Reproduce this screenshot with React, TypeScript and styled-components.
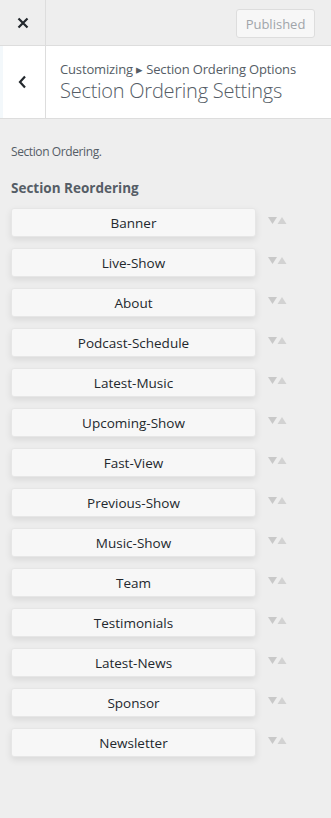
import React from "react";
import styled, { createGlobalStyle } from "styled-components";

const Global = createGlobalStyle`
  html, body { margin: 0; padding: 0; background: #eeeeee; }
  body { font-family: "Open Sans", "Noto Sans", sans-serif; -webkit-font-smoothing: antialiased; }
  * { box-sizing: border-box; }
`;

const Page = styled.div`
  width: 331px;
  min-height: 818px;
  background: #eeeeee;
  display: flex;
  flex-direction: column;
`;

const TopBar = styled.div`
  height: 46px;
  display: flex;
  align-items: center;
  border-bottom: 1px solid #dddddd;
  background: #eeeeee;
`;

const CloseBtn = styled.div`
  width: 46px;
  height: 45px;
  border-right: 1px solid #dddddd;
  display: flex;
  align-items: center;
  justify-content: center;
  color: #23282d;
`;

const PublishWrap = styled.div`
  flex: 1;
  display: flex;
  justify-content: flex-end;
  padding-right: 16px;
  padding-top: 2px;
`;

const PublishBtn = styled.div`
  width: 79px;
  height: 29px;
  border: 1px solid #dddddd;
  border-radius: 3px;
  background: #f7f7f7;
  color: #a0a5aa;
  font-size: 13px;
  display: flex;
  align-items: center;
  justify-content: center;
`;

const SectionHead = styled.div`
  height: 73px;
  display: flex;
  background: #ffffff;
  border-bottom: 1px solid #dddddd;
`;

const BackBtn = styled.div`
  width: 46px;
  border-right: 1px solid #dddddd;
  border-left: 3px solid #f3f8fb;
  display: flex;
  align-items: center;
  justify-content: center;
  padding-right: 3px;
  color: #23282d;
`;

const TitleBlock = styled.div`
  display: flex;
  flex-direction: column;
  justify-content: center;
  padding-left: 14px;
  padding-bottom: 1px;
`;

const Crumb = styled.div`
  font-size: 13px;
  color: #555d66;
  line-height: 18px;
  letter-spacing: -0.15px;
`;

const Title = styled.div`
  font-size: 20px;
  font-weight: 300;
  color: #555d66;
  line-height: 26px;
  letter-spacing: -0.25px;
`;

const Body = styled.div`
  padding: 25px 11px 20px 11px;
  display: flex;
  flex-direction: column;
`;

const Desc = styled.div`
  font-size: 12px;
  color: #555d66;
  line-height: 16px;
  letter-spacing: -0.4px;
`;

const Heading = styled.div`
  font-size: 13.5px;
  font-weight: 700;
  color: #555d66;
  line-height: 18px;
  margin-top: 19px;
  margin-bottom: 11px;
`;

const List = styled.div`
  display: flex;
  flex-direction: column;
  gap: 11px;
`;

const Row = styled.div`
  display: flex;
  align-items: center;
`;

const Item = styled.div`
  width: 245px;
  height: 29px;
  background: #f7f7f7;
  border: 1px solid #e6e6e6;
  border-radius: 3px;
  box-shadow: 0 3px 7px rgba(0, 0, 0, 0.09);
  display: flex;
  align-items: center;
  justify-content: center;
  font-size: 13.5px;
  color: #23282d;
`;

const Arrows = styled.div`
  margin-left: 12px;
  margin-top: -4px;
  display: flex;
`;

const items = [
  "Banner",
  "Live-Show",
  "About",
  "Podcast-Schedule",
  "Latest-Music",
  "Upcoming-Show",
  "Fast-View",
  "Previous-Show",
  "Music-Show",
  "Team",
  "Testimonials",
  "Latest-News",
  "Sponsor",
  "Newsletter",
];

export default function App() {
  return (
    <Page>
      <Global />
      <TopBar>
        <CloseBtn>
          <svg width="12" height="12" viewBox="0 0 12 12">
            <path d="M1.5 1.5 L10.5 10.5 M10.5 1.5 L1.5 10.5" stroke="#23282d" strokeWidth="2.2" />
          </svg>
        </CloseBtn>
        <PublishWrap>
          <PublishBtn>Published</PublishBtn>
        </PublishWrap>
      </TopBar>
      <SectionHead>
        <BackBtn>
          <svg width="9" height="14" viewBox="0 0 9 14">
            <path d="M7 1.5 L2 7 L7 12.5" stroke="#23282d" strokeWidth="2.2" fill="none" />
          </svg>
        </BackBtn>
        <TitleBlock>
          <Crumb>Customizing ▸ Section Ordering Options</Crumb>
          <Title>Section Ordering Settings</Title>
        </TitleBlock>
      </SectionHead>
      <Body>
        <Desc>Section Ordering.</Desc>
        <Heading>Section Reordering</Heading>
        <List>
          {items.map((t) => (
            <Row key={t}>
              <Item>{t}</Item>
              <Arrows>
                <svg width="19" height="8" viewBox="0 0 19 8">
                  <path d="M0 0 H9 L4.5 7 Z" fill="#c8c8c8" />
                  <path d="M9.5 7 L14 0 L18.5 7 Z" fill="#d2d2d2" />
                </svg>
              </Arrows>
            </Row>
          ))}
        </List>
      </Body>
    </Page>
  );
}
